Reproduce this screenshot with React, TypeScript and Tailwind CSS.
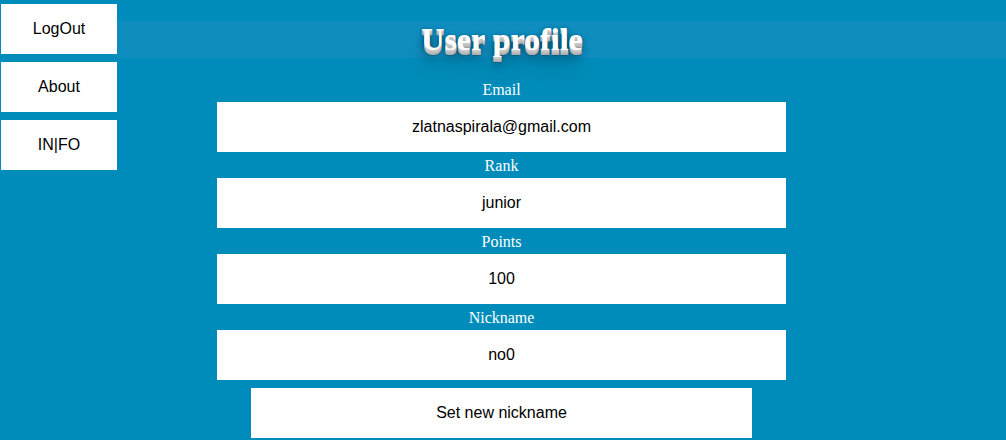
const FIELDS = [
  { label: "Email", value: "zlatnaspirala@gmail.com" },
  { label: "Rank", value: "junior" },
  { label: "Points", value: "100" },
  { label: "Nickname", value: "no0" },
];

const NAV = ["LogOut", "About", "IN|FO"];

export default function App() {
  return (
    <div className="min-h-screen bg-[#008cba] flex font-['Liberation_Sans',Arial,sans-serif]">
      <nav className="w-[116px] ml-[1px] pt-[4px] flex flex-col gap-[8px] shrink-0">
        {NAV.map((item) => (
          <button
            key={item}
            className="h-[50px] w-full bg-white text-black text-[16px] flex items-center justify-center cursor-pointer"
          >
            {item}
          </button>
        ))}
      </nav>

      <main className="flex-1 pt-[21px] flex flex-col">
        <div className="h-[37px] bg-[#108dbf] pr-[119px] text-center">
          <h1 className="text-white font-bold text-[32px] leading-[37px] font-['Liberation_Serif','Times_New_Roman',serif] [text-shadow:0_1px_0_#ccc,0_2px_0_#c9c9c9,0_3px_0_#bbb,0_4px_0_#b9b9b9,0_5px_0_#aaa,0_6px_1px_rgba(0,0,0,0.1),0_0_5px_rgba(0,0,0,0.1),0_1px_3px_rgba(0,0,0,0.3),0_3px_5px_rgba(0,0,0,0.2),0_5px_10px_rgba(0,0,0,0.25),0_10px_10px_rgba(0,0,0,0.2),0_20px_20px_rgba(0,0,0,0.15)]">
            User profile
          </h1>
        </div>

        <div className="mt-[18px] ml-[100px] w-[569px] flex flex-col">
          {FIELDS.map((f) => (
            <div key={f.label} className="flex flex-col">
              <label className="h-[26px] pt-[1px] leading-[25px] text-center text-white text-[16px] font-['Liberation_Serif','Times_New_Roman',serif]">
                {f.label}
              </label>
              <div className="h-[50px] bg-white text-black text-[16px] flex items-center justify-center">
                {f.value}
              </div>
            </div>
          ))}
          <button className="mt-[8px] ml-[34px] w-[501px] h-[50px] bg-white text-black text-[16px] flex items-center justify-center cursor-pointer">
            Set new nickname
          </button>
        </div>
      </main>
    </div>
  );
}
